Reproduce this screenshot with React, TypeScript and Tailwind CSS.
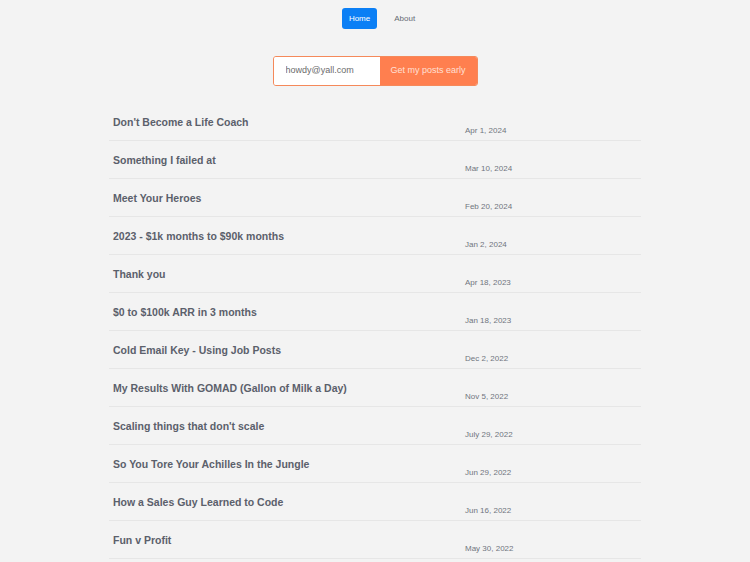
const posts = [
  { title: "Don't Become a Life Coach", date: "Apr 1, 2024" },
  { title: "Something I failed at", date: "Mar 10, 2024" },
  { title: "Meet Your Heroes", date: "Feb 20, 2024" },
  { title: "2023 - $1k months to $90k months", date: "Jan 2, 2024" },
  { title: "Thank you", date: "Apr 18, 2023" },
  { title: "$0 to $100k ARR in 3 months", date: "Jan 18, 2023" },
  { title: "Cold Email Key - Using Job Posts", date: "Dec 2, 2022" },
  { title: "My Results With GOMAD (Gallon of Milk a Day)", date: "Nov 5, 2022" },
  { title: "Scaling things that don't scale", date: "July 29, 2022" },
  { title: "So You Tore Your Achilles In the Jungle", date: "Jun 29, 2022" },
  { title: "How a Sales Guy Learned to Code", date: "Jun 16, 2022" },
  { title: "Fun v Profit", date: "May 30, 2022" },
];

export default function App() {
  return (
    <div className="min-h-screen bg-[#f3f3f3] font-['Liberation_Sans',Arial,sans-serif]">
      <nav className="flex justify-center items-center gap-[8px] pt-[8px] pl-[16px]">
        <a className="h-[21px] px-[7px] flex items-center rounded-[3px] bg-[#0b7ff5] text-white text-[8px]">Home</a>
        <a className="h-[21px] px-[9px] flex items-center text-[#666b73] text-[8px]">About</a>
      </nav>

      <form className="flex justify-center mt-[27px]">
        <div className="flex h-[30px] border border-[#f5895a] rounded-[3px] overflow-hidden">
          <input
            className="w-[106px] bg-white px-[12px] text-[9px] text-[#555] outline-none placeholder:text-[#6b6b6b]"
            placeholder="howdy@yall.com"
          />
          <button type="button" className="w-[97px] bg-[#ff7f4f] text-[#ffe0d6] text-[9px]">
            Get my posts early
          </button>
        </div>
      </form>

      <ul className="w-[532px] mx-auto mt-[17px]">
        {posts.map((p) => (
          <li key={p.title} className="flex h-[38px] border-b border-[#e6e6e6]">
            <div className="w-[356px] pl-[4px] pt-[12px] text-[10.5px] leading-[14px] font-bold text-[#5b606b]">
              {p.title}
            </div>
            <div className="pt-[23px] text-[8px] leading-[10px] text-[#70757e]">{p.date}</div>
          </li>
        ))}
      </ul>
    </div>
  );
}
